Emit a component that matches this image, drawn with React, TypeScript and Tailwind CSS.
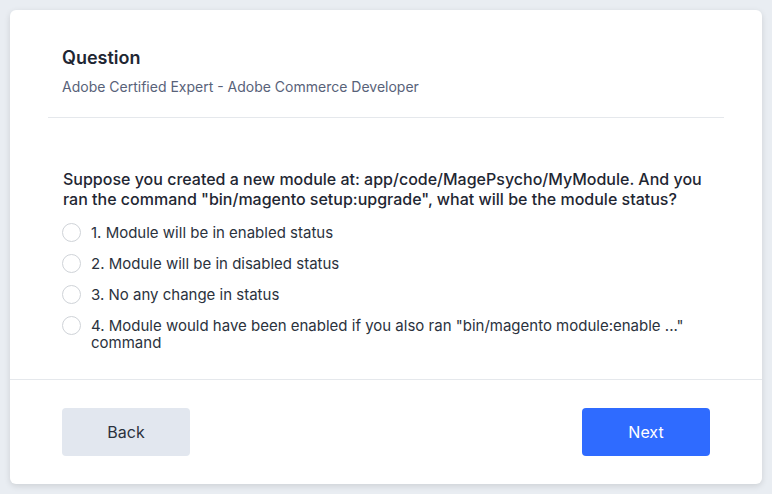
import { useState } from 'react';

const options = [
    '1. Module will be in enabled status',
    '2. Module will be in disabled status',
    '3. No any change in status',
    '4. Module would have been enabled if you also ran "bin/magento module:enable ..." command',
];

export default function App() {
    const [selected, setSelected] = useState<number | null>(null);

    return (
        <div className="min-h-screen bg-[#e9edf2] p-[10px]" style={{ fontFamily: 'Inter, "Noto Sans", sans-serif' }}>
            <div className="bg-white rounded-md shadow-[0_2px_6px_rgba(0,0,0,0.12)] h-[474px] flex flex-col">
                {/* Header */}
                <div className="mx-[38px] px-[14px] pt-[36px] pb-[21px] border-b border-[#e5e8ec]">
                    <h1 className="text-[18px] font-semibold text-[#1f2733] leading-[24px]">Question</h1>
                    <p className="mt-[8px] text-[14px] text-[#586279] leading-[18px]">
                        Adobe Certified Expert - Adobe Commerce Developer
                    </p>
                </div>

                {/* Body */}
                <div className="flex-1 px-[52px] pt-[51px]">
                    <p className="text-[16px] font-medium text-[#1f2733] leading-[20px] pl-px">
                        Suppose you created a new module at: app/code/MagePsycho/MyModule. And you ran the command "bin/magento setup:upgrade", what will be the module status?
                    </p>
                    <div className="mt-[14px] flex flex-col gap-[12px]">
                        {options.map((opt, i) => (
                            <label key={i} className="flex items-start gap-[10px] cursor-pointer">
                                <input
                                    type="radio"
                                    name="answer"
                                    checked={selected === i}
                                    onChange={() => setSelected(i)}
                                    className="appearance-none shrink-0 w-[19px] h-[19px] rounded-full border border-[#cfd3d8] bg-white checked:border-[6px] checked:border-[#2f6bff]"
                                />
                                <span className="text-[15px] text-[#2b323d] leading-[17px] pt-px">{opt}</span>
                            </label>
                        ))}
                    </div>
                </div>

                {/* Footer */}
                <div className="border-t border-[#e5e8ec] px-[52px] pt-[28px] pb-[28px] flex justify-between">
                    <button className="w-[128px] h-[48px] rounded-[4px] bg-[#e2e7ef] text-[16px] text-[#2b323d]">
                        Back
                    </button>
                    <button className="w-[128px] h-[48px] rounded-[4px] bg-[#2f6bff] text-[16px] text-white">
                        Next
                    </button>
                </div>
            </div>
        </div>
    );
}
